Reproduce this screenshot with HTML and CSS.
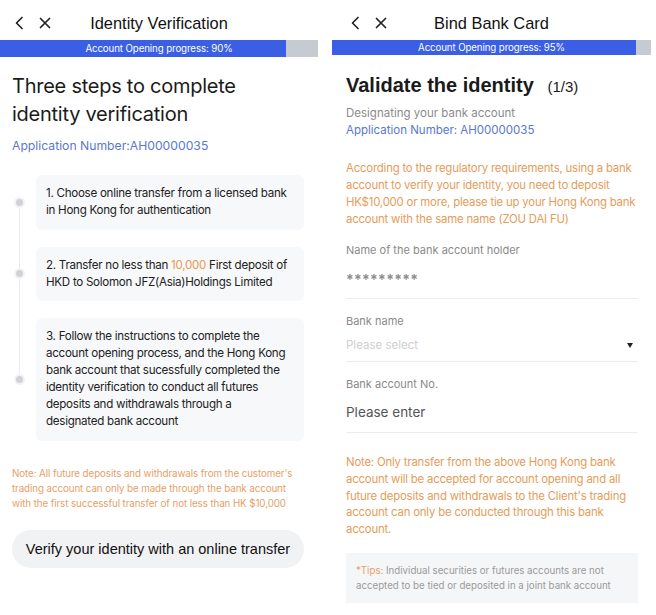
FILE: index.html
```html
<!DOCTYPE html>
<html>
<head>
<meta charset="utf-8">
<link rel="stylesheet" href="styles.css">
</head>
<body>
<div class="screens">
  <section class="screen left">
    <header class="nav">
      <svg class="ic-back" width="10" height="14" viewBox="0 0 10 14"><path d="M8 1.5 L2.5 7 L8 12.5" fill="none" stroke="#222" stroke-width="1.7" stroke-linecap="round" stroke-linejoin="round"/></svg>
      <svg class="ic-close" width="12" height="12" viewBox="0 0 12 12"><path d="M1.5 1.5 L10.5 10.5 M10.5 1.5 L1.5 10.5" fill="none" stroke="#222" stroke-width="1.7" stroke-linecap="round"/></svg>
      <h2 class="nav-title">Identity Verification</h2>
    </header>
    <div class="progress p90"><div class="fill"></div><span class="ptext">Account Opening progress: 90%</span></div>
    <div class="content">
      <h1 class="big-title">Three steps to complete identity verification</h1>
      <div class="app-no">Application Number:AH00000035</div>
      <div class="steps">
        <div class="rail"></div>
        <div class="step"><span class="dot"></span><div class="card">1. Choose online transfer from a licensed bank in Hong Kong for authentication</div></div>
        <div class="step"><span class="dot"></span><div class="card">2. Transfer no less than <span class="hl">10,000</span> First deposit of HKD to Solomon JFZ(Asia)Holdings Limited</div></div>
        <div class="step"><span class="dot"></span><div class="card">3. Follow the instructions to complete the account opening process, and the Hong Kong bank account that sucessfully completed the identity verification to conduct all futures deposits and withdrawals through a designated bank account</div></div>
      </div>
      <p class="note-small">Note: All future deposits and withdrawals from the customer's trading account can only be made through the bank account with the first successful transfer of not less than HK $10,000</p>
      <button class="verify-btn">Verify your identity with an online transfer</button>
    </div>
  </section>

  <section class="screen right">
    <header class="nav">
      <svg class="ic-back" width="10" height="14" viewBox="0 0 10 14"><path d="M8 1.5 L2.5 7 L8 12.5" fill="none" stroke="#222" stroke-width="1.7" stroke-linecap="round" stroke-linejoin="round"/></svg>
      <svg class="ic-close" width="12" height="12" viewBox="0 0 12 12"><path d="M1.5 1.5 L10.5 10.5 M10.5 1.5 L1.5 10.5" fill="none" stroke="#222" stroke-width="1.7" stroke-linecap="round"/></svg>
      <h2 class="nav-title">Bind Bank Card</h2>
    </header>
    <div class="progress p95"><div class="fill"></div><span class="ptext">Account Opening progress: 95%</span></div>
    <div class="content r">
      <h1 class="val-title">Validate the identity <span class="step-count">(1/3)</span></h1>
      <div class="sub">Designating your bank account</div>
      <div class="app-no2">Application Number: AH00000035</div>
      <p class="warn">According to the regulatory requirements, using a bank account to verify your identity, you need to deposit HK$10,000 or more, please tie up your Hong Kong bank account with the same name (ZOU DAI FU)</p>
      <div class="field">
        <div class="label">Name of the bank account holder</div>
        <div class="value masked">*********</div>
      </div>
      <div class="field">
        <div class="label">Bank name</div>
        <div class="value select"><span class="ph">Please select</span><span class="caret"></span></div>
      </div>
      <div class="field">
        <div class="label">Bank account No.</div>
        <div class="value enter">Please enter</div>
      </div>
      <p class="warn note2">Note: Only transfer from the above Hong Kong bank account will be accepted for account opening and all future deposits and withdrawals to the Client's trading account can only be conducted through this bank account.</p>
      <div class="tips"><span class="tip-key">*Tips:</span> Individual securities or futures accounts are not accepted to be tied or deposited in a joint bank account</div>
    </div>
  </section>
</div>
</body>
</html>
```

FILE: styles.css
```css
* { box-sizing: border-box; }
html, body { margin: 0; padding: 0; background: #fff; }
body {
  font-family: Inter, "Liberation Sans", sans-serif;
  color: #222;
  width: 656px;
  height: 615px;
  overflow: hidden;
}
.screens {
  display: flex;
  gap: 14px;
}
.screen { flex: none; }
.screen.left { width: 318px; }
.screen.right { width: 319px; }

.nav {
  height: 40px;
  position: relative;
  display: flex;
  align-items: center;
  padding-top: 6px;
}
.ic-back { position: absolute; left: 14px; top: 16px; }
.ic-close { position: absolute; left: 39px; top: 17px; }
.right .ic-back { left: 18px; }
.right .ic-close { left: 43px; }
.nav-title {
  margin: 0;
  width: 100%;
  text-align: center;
  font-family: "Liberation Sans", Arial, sans-serif;
  font-weight: normal;
  font-size: 16.4px;
  color: #111;
}

.progress {
  position: relative;
  height: 17px;
  background: #c6cad3;
  display: flex;
  align-items: center;
  justify-content: center;
}
.right .progress { height: 15px; }
.progress .fill {
  position: absolute;
  left: 0; top: 0; bottom: 0;
  background: #3a5fe5;
}
.p90 .fill { width: 286px; }
.p95 .fill { width: 304px; }
.ptext {
  position: relative;
  color: #fff;
  font-size: 9.7px;
  letter-spacing: -0.1px;
}

.content { padding: 0 14px 0 12px; }
.content.r { padding: 0 13px 0 14px; }

.big-title {
  margin: 15px 0 0;
  font-weight: 400;
  font-size: 20px;
  line-height: 28px;
  color: #1b1b1b;
  letter-spacing: -0.25px;
}
.app-no {
  margin-top: 9px;
  font-size: 12.2px;
  line-height: 18px;
  color: #5a78cc;
}

.steps {
  position: relative;
  margin-top: 20px;
  display: flex;
  flex-direction: column;
  gap: 17px;
}
.rail {
  position: absolute;
  left: 6.5px;
  top: 26px;
  bottom: 58px;
  width: 1.5px;
  background: #ececef;
}
.step {
  display: flex;
  align-items: center;
}
.dot {
  position: relative;
  flex: none;
  width: 11px;
  height: 11px;
  margin-left: 2px;
  margin-right: 11px;
  border-radius: 50%;
  background: #d2d2d6;
  border: 2px solid #f3f3f5;
}
.card {
  flex: none;
  width: 268px;
  background: #f7f8fa;
  border-radius: 6px;
  padding: 10px 16px 10.5px 10px;
  font-size: 11.6px;
  line-height: 17px;
  color: #222;
  letter-spacing: -0.28px;
}
.hl { color: #e89a52; }

.note-small {
  margin: 25px 0 0;
  font-size: 9.8px;
  line-height: 15px;
  color: #e6a066;
  letter-spacing: -0.1px;
}
.verify-btn {
  display: block;
  margin-top: 19px;
  width: 292px;
  height: 38px;
  border: none;
  border-radius: 19px;
  background: #f1f2f4;
  font-family: "Liberation Sans", Arial, sans-serif;
  font-size: 14.5px;
  color: #111;
  padding: 0;
}

/* right screen */
.val-title {
  margin: 17px 0 0;
  font-family: "Liberation Sans", Arial, sans-serif;
  font-weight: 700;
  font-size: 20px;
  line-height: 26px;
  color: #1a1a1a;
}
.step-count {
  font-weight: 400;
  font-size: 15px;
  margin-left: 8px;
}
.sub {
  margin-top: 5px;
  font-size: 11.5px;
  line-height: 17px;
  color: #8b8b8b;
}
.app-no2 {
  font-size: 11.5px;
  line-height: 17px;
  color: #5a78cc;
}
.warn {
  margin: 21px 0 0;
  font-size: 11.4px;
  line-height: 17px;
  color: #e59c5a;
  letter-spacing: -0.2px;
}
.field {
  border-bottom: 1px solid #ececec;
}
.field .label {
  padding-top: 14px;
  font-size: 11px;
  line-height: 16px;
  color: #8a8a8a;
}
.value {
  height: 34px;
  display: flex;
  align-items: center;
}
.masked {
  height: 40px;
  padding-top: 2px;
  color: #8a8a8a;
  font-size: 14px;
  letter-spacing: 0.2px;
  filter: blur(0.6px);
  font-weight: 700;
}
.select { justify-content: space-between; height: 32px; }
.ph { font-size: 11.5px; color: #cfcfcf; }
.caret {
  width: 0; height: 0;
  border-left: 3.5px solid transparent;
  border-right: 3.5px solid transparent;
  border-top: 5px solid #222;
  margin-right: 5px;
}
.enter { font-size: 13.5px; color: #555; height: 40px; }
.note2 { margin-top: 21px; line-height: 16.8px; }
.tips {
  margin-top: 15px;
  background: #f5f6f8;
  padding: 10px 10px;
  font-size: 9.7px;
  line-height: 15px;
  color: #9a9a9a;
}
.tip-key { color: #e8a066; }
```
